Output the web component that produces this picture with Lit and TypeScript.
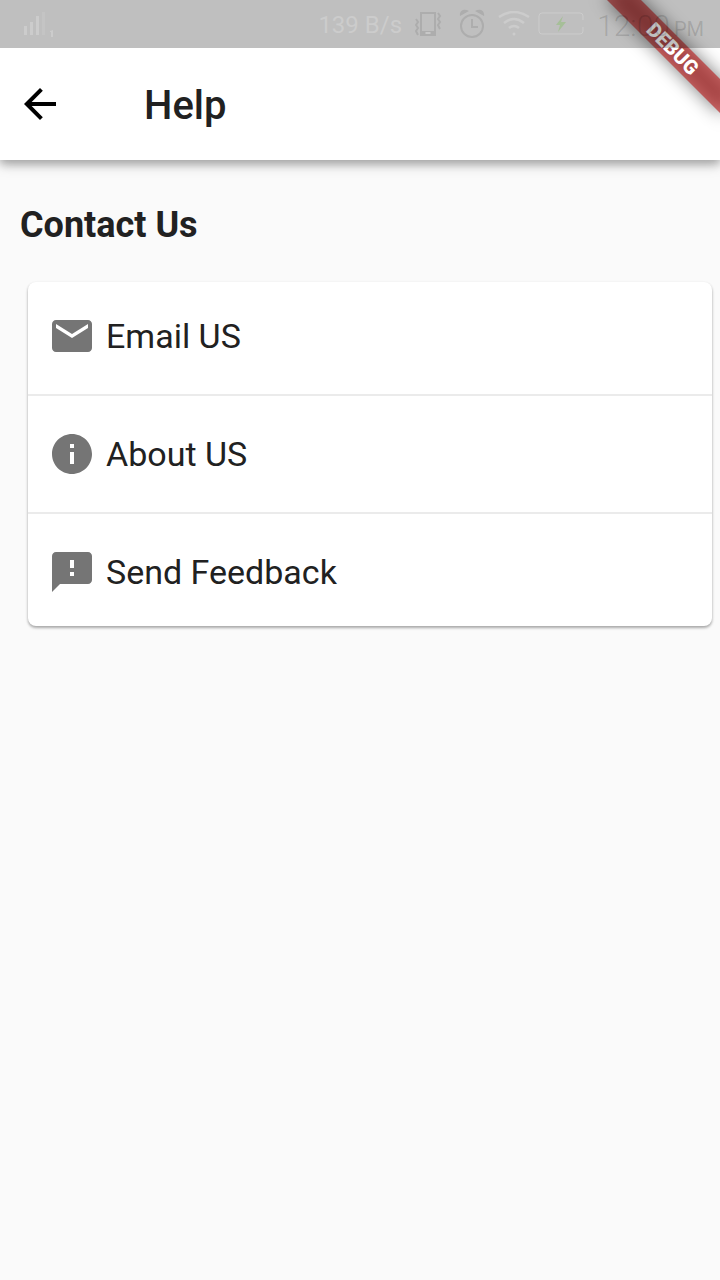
import { LitElement, html, css, svg } from "lit";
import { customElement } from "lit/decorators.js";

const icons = {
  email: "M20 4H4c-1.100 0-1.990.9-1.990 2L2 18c0 1.100.9 2 2 2h16c1.100 0 2-.9 2-2V6c0-1.100-.9-2-2-2zm0 4l-8 5-8-5V6l8 5 8-5v2z",
  info: "M12 2C6.480 2 2 6.480 2 12s4.480 10 10 10 10-4.480 10-10S17.520 2 12 2zm1 15h-2v-6h2v6zm0-8h-2V7h2v2z",
  feedback: "M20 2H4c-1.100 0-1.990.9-1.990 2L2 22l4-4h14c1.100 0 2-.9 2-2V4c0-1.100-.9-2-2-2zm-7 12h-2v-2h2v2zm0-4h-2V6h2v4z",
  back: "M20 11H7.830l5.590-5.590L12 4l-8 8 8 8 1.410-1.410L7.830 13H20v-2z",
};

const entries = [
  { icon: icons.email, label: "Email US" },
  { icon: icons.info, label: "About US" },
  { icon: icons.feedback, label: "Send Feedback" },
];

@customElement("status-bar")
class StatusBar extends LitElement {
  static styles = css`
    :host {
      display: flex;
      align-items: center;
      height: 48px;
      padding: 0 16px 0 20px;
      background: rgba(0, 0, 0, 0.25);
      color: #cccccc;
    }
    svg {
      display: block;
      flex: none;
    }
    .signal {
      margin-right: auto;
    }
    .rate {
      padding-top: 2px;
      font-size: 24px;
      margin-right: 13px;
      white-space: nowrap;
    }
    .alarm {
      margin-left: 16px;
    }
    .wifi {
      margin-left: 13px;
    }
    .battery {
      margin: 0 13px 0 8px;
    }
    .clock {
      padding-top: 2px;
      color: rgba(0, 0, 0, 0.14);
      font-size: 30px;
      font-weight: 300;
      white-space: nowrap;
    }
    .period {
      margin-left: 4px;
      font-size: 20px;
      font-weight: 400;
    }
  `;

  render() {
    return html`
      <svg class="signal" width="36" height="28" viewBox="0 0 36 28" fill="#cccccc">
        <path d="M4 16h3v9H4zM10 12h3v13h-3zM16 6h3v19h-3z" />
        <path d="M22 2h3v23h-3z" fill="#c4c4c4" />
        <path d="M30 21l3-1v7h-2v-5h-1z" />
      </svg>
      <span class="rate">139 B/s</span>
      <svg width="28" height="26" viewBox="0 0 28 26" fill="none" stroke="#adadad" stroke-width="2">
        <path d="M6 2h14v22H6z" />
        <path d="M6 20h14v5H6z" fill="#adadad" stroke="none" />
        <path d="M10.500 22h5" stroke="#c8c8c8" />
        <path d="M1 8l2 3-2 3 2 3-2 3 2 4M23 2l2 3-2 3 2 3-2 3 2 4" />
      </svg>
      <svg class="alarm" width="26" height="30" viewBox="0 0 26 30" fill="none" stroke="#adadad" stroke-width="2">
        <circle cx="13" cy="17" r="11" />
        <path d="M13 10v8h6" />
        <path d="M1 7C0 2 5-1 10 2zM25 7C26 2 21-1 16 2z" fill="#adadad" stroke="none" />
      </svg>
      <svg class="wifi" width="32" height="26" viewBox="0 0 32 26" fill="none" stroke="#cccccc" stroke-width="2.500">
        <path d="M1 6Q16-4 31 6M6 12q10-8 20 0M11 17q5-4 10 0" />
        <circle cx="16" cy="23" r="1.500" fill="#cccccc" stroke="none" />
      </svg>
      <svg class="battery" width="46" height="24" viewBox="0 0 46 24" fill="none" stroke="#cccccc" stroke-width="1">
        <path d="M45 8V4q0-3-3-3H4Q1 1 1 4v15q0 3 3 3h38q3 0 3-3v-4" />
        <path d="M25 4l-7 9h4l-2 7 8-10h-5z" fill="#a6bf98" stroke="none" />
      </svg>
      <span class="clock">12:00<span class="period">PM</span></span>
    `;
  }
}

@customElement("debug-banner")
class DebugBanner extends LitElement {
  static styles = css`
    :host {
      position: absolute;
      top: 0;
      right: 0;
      width: 160px;
      height: 160px;
      overflow: hidden;
      pointer-events: none;
    }
    .ribbon,
    .shade {
      position: absolute;
      top: 36px;
      right: -32px;
      box-sizing: border-box;
      width: 160px;
      height: 24px;
      transform: rotate(45deg);
    }
    .shade {
      background: rgba(0, 0, 0, 0.5);
      filter: blur(9px);
    }
    .ribbon {
      padding-left: 2px;
      background: rgba(183, 28, 28, 0.63);
      color: #ffffff;
      font-size: 20px;
      line-height: 24px;
      font-weight: 900;
      text-align: center;
    }
  `;

  render() {
    return html`
      <div class="shade"></div>
      <div class="ribbon">DEBUG</div>
    `;
  }
}

@customElement("app-root")
class AppRoot extends LitElement {
  static styles = css`
    :host {
      display: block;
      position: relative;
      min-height: 100vh;
      background: #fafafa;
      color: #212121;
      font-family: Roboto, sans-serif;
    }
    status-bar {
      position: relative;
      z-index: 1;
    }
    header {
      background: #ffffff;
      box-shadow: 0 4px 8px rgba(0, 0, 0, 0.16), 0 4px 12px rgba(0, 0, 0, 0.26);
    }
    .bar {
      display: flex;
      align-items: center;
      height: 112px;
      padding-left: 16px;
    }
    button {
      margin: 0;
      border: 0;
      background: none;
      font: inherit;
      color: inherit;
      cursor: pointer;
    }
    .back {
      padding: 0;
      margin-right: 80px;
      color: #000000;
    }
    svg {
      display: block;
      flex: none;
      width: 48px;
      height: 48px;
      fill: currentColor;
    }
    h1 {
      margin: 0;
      padding-top: 4px;
      font-size: 40px;
      line-height: 48px;
      font-weight: 500;
    }
    main {
      padding: 40px 8px 40px 20px;
    }
    h2 {
      margin: 0;
      font-size: 36px;
      line-height: 50px;
      font-weight: 700;
    }
    ul {
      list-style: none;
      margin: 32px 0 0 8px;
      padding: 0;
      background: #ffffff;
      border-radius: 8px;
      box-shadow: 0 2px 3px rgba(0, 0, 0, 0.28), 0 1px 3px rgba(0, 0, 0, 0.1);
    }
    li + li {
      margin-top: 4px;
      border-top: 2px solid #ebebeb;
      padding-top: 4px;
    }
    .entry {
      display: flex;
      align-items: center;
      gap: 10px;
      width: 100%;
      height: 108px;
      padding: 0 20px;
      font-size: 34px;
      line-height: 40px;
      text-align: left;
    }
    .entry svg {
      color: #757575;
    }
  `;

  render() {
    return html`
      <header>
        <status-bar></status-bar>
        <div class="bar">
          <button class="back" aria-label="Back">${this.icon(icons.back)}</button>
          <h1>Help</h1>
        </div>
      </header>
      <main>
        <h2>Contact Us</h2>
        <ul>
          ${entries.map(
            (entry) => html`
              <li>
                <button class="entry">${this.icon(entry.icon)}<span>${entry.label}</span></button>
              </li>
            `
          )}
        </ul>
      </main>
      <debug-banner></debug-banner>
    `;
  }

  private icon(path: string) {
    return html`<svg viewBox="0 0 24 24" aria-hidden="true">${svg`<path d=${path} />`}</svg>`;
  }
}
